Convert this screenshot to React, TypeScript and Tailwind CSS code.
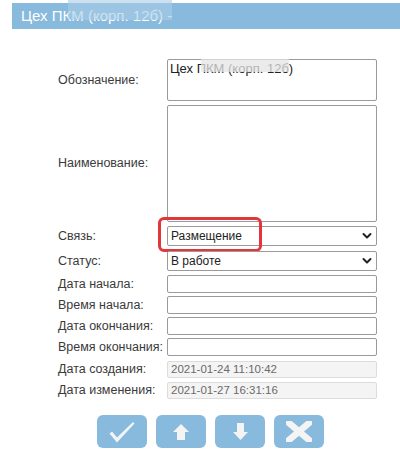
import React from "react";

const font = { fontFamily: '"Liberation Sans", Arial, sans-serif' };

function Chevron() {
  return (
    <svg width="10" height="7" viewBox="0 0 10 7" className="absolute right-[4px] top-1/2 -translate-y-1/2">
      <path d="M1.5 1.5 L5 5 L8.5 1.5" fill="none" stroke="#222" strokeWidth="2" strokeLinecap="round" strokeLinejoin="round" />
    </svg>
  );
}

function Row({ label, h, children, mt = 0 }: { label: string; h: number; children: React.ReactNode; mt?: number }) {
  return (
    <div className="flex" style={{ height: h, marginTop: mt }}>
      <div className="w-[109px] flex items-center text-[12.5px] text-[#3a3a3a] whitespace-nowrap">{label}</div>
      <div className="relative w-[210px]">{children}</div>
    </div>
  );
}

function TextInput() {
  return <div className="h-[18px] w-[210px] border border-[#9a9a9a] rounded-[2px] bg-white" />;
}

function Disabled({ value }: { value: string }) {
  return (
    <div className="mt-[1px] h-[17px] w-[210px] border border-[#dcdcdc] rounded-[2px] bg-[#f4f4f4] text-[11.5px] text-[#6a6a6a] pl-[3px] flex items-center leading-none">
      {value}
    </div>
  );
}

function Label({ text, h = 18 }: { text: string; h?: number }) {
  return (
    <div className="w-[109px] flex items-center text-[12.5px] text-[#3a3a3a] whitespace-nowrap" style={{ height: h }}>
      {text}
    </div>
  );
}

export default function App() {
  return (
    <div className="w-[400px] h-[460px] bg-white overflow-hidden" style={font}>
      <div className="ml-[12px] mt-[3px] h-[26px] bg-[#87badc] relative">
        <div className="pl-[9px] text-white text-[15px] leading-[26px] whitespace-nowrap">Цех ПКМ (корп. 12б) -</div>
        <div className="absolute left-[56px] top-[-3px] w-[104px] h-[20px] bg-[#a9cde6]/60" />
      </div>

      <div className="ml-[58px] mt-[30px]">
        <Row label="Обозначение:" h={42}>
          <div className="h-[42px] w-[210px] border border-[#9a9a9a] rounded-[2px] bg-white text-[13px] text-[#222] pl-[2px] pt-[1px] leading-[15px] relative">
            Цех ПКМ (корп. 12б)
            <div className="absolute left-[33px] top-[-1px] w-[88px] h-[13px] bg-[#e4e4e4]/75" />
          </div>
        </Row>
        <Row label="Наименование:" h={117} mt={4}>
          <div className="h-[117px] w-[210px] border border-[#9a9a9a] rounded-[2px] bg-white" />
        </Row>
        <Row label="Связь:" h={20} mt={4}>
          <div className="h-[20px] w-[210px] border border-[#9a9a9a] rounded-[2px] bg-white text-[12px] text-[#222] pl-[3px] flex items-center relative">
            Размещение
            <Chevron />
          </div>
          <div className="absolute left-[-9px] top-[-9px] w-[104px] h-[35px] border-[3px] border-[#e2363a] rounded-[6px]" />
        </Row>
        <Row label="Статус:" h={20} mt={5}>
          <div className="h-[20px] w-[210px] border border-[#9a9a9a] rounded-[2px] bg-white text-[12px] text-[#222] pl-[3px] flex items-center relative">
            В работе
            <Chevron />
          </div>
        </Row>
        <div className="mt-[4px]">
          <div className="flex h-[21px]">
            <Label text="Дата начала:" />
            <TextInput />
          </div>
          <div className="flex h-[21px]">
            <Label text="Время начала:" />
            <TextInput />
          </div>
          <div className="flex h-[21px]">
            <Label text="Дата окончания:" />
            <TextInput />
          </div>
          <div className="flex h-[22px]">
            <Label text="Время окончания:" />
            <TextInput />
          </div>
          <div className="flex h-[21px]">
            <Label text="Дата создания:" h={19} />
            <Disabled value="2021-01-24 11:10:42" />
          </div>
          <div className="flex h-[21px]">
            <Label text="Дата изменения:" h={19} />
            <Disabled value="2021-01-27 16:31:16" />
          </div>
        </div>
      </div>

      <div className="ml-[97px] mt-[13px] flex gap-[9px]">
        <div className="w-[50px] h-[33px] rounded-[6px] bg-[#87badc] flex items-center justify-center">
          <svg width="30" height="24" viewBox="0 0 30 24">
            <path d="M2.5 13.5 L5 11.5 L10 17.5 L26 2 L27.5 3.5 L10 22.5 Z" fill="#f4f4f4" />
          </svg>
        </div>
        <div className="w-[50px] h-[33px] rounded-[6px] bg-[#87badc] flex items-center justify-center">
          <svg width="16" height="16" viewBox="0 0 16 16">
            <path d="M8 0 L16 8 L12 8 L12 16 L4 16 L4 8 L0 8 Z" fill="#f4f4f4" />
          </svg>
        </div>
        <div className="w-[50px] h-[33px] rounded-[6px] bg-[#87badc] flex items-center justify-center">
          <svg width="15" height="17" viewBox="0 0 15 17">
            <path d="M4 0 L11 0 L11 9 L15 9 L7.5 17 L0 9 L4 9 Z" fill="#f4f4f4" />
          </svg>
        </div>
        <div className="w-[50px] h-[33px] rounded-[6px] bg-[#87badc] flex items-center justify-center">
          <svg width="26" height="21" viewBox="0 0 26 21">
            <path d="M3 2 L23 19 M23 2 L3 19" stroke="#f4f4f4" strokeWidth="6.5" strokeLinecap="square" />
          </svg>
        </div>
      </div>
    </div>
  );
}
